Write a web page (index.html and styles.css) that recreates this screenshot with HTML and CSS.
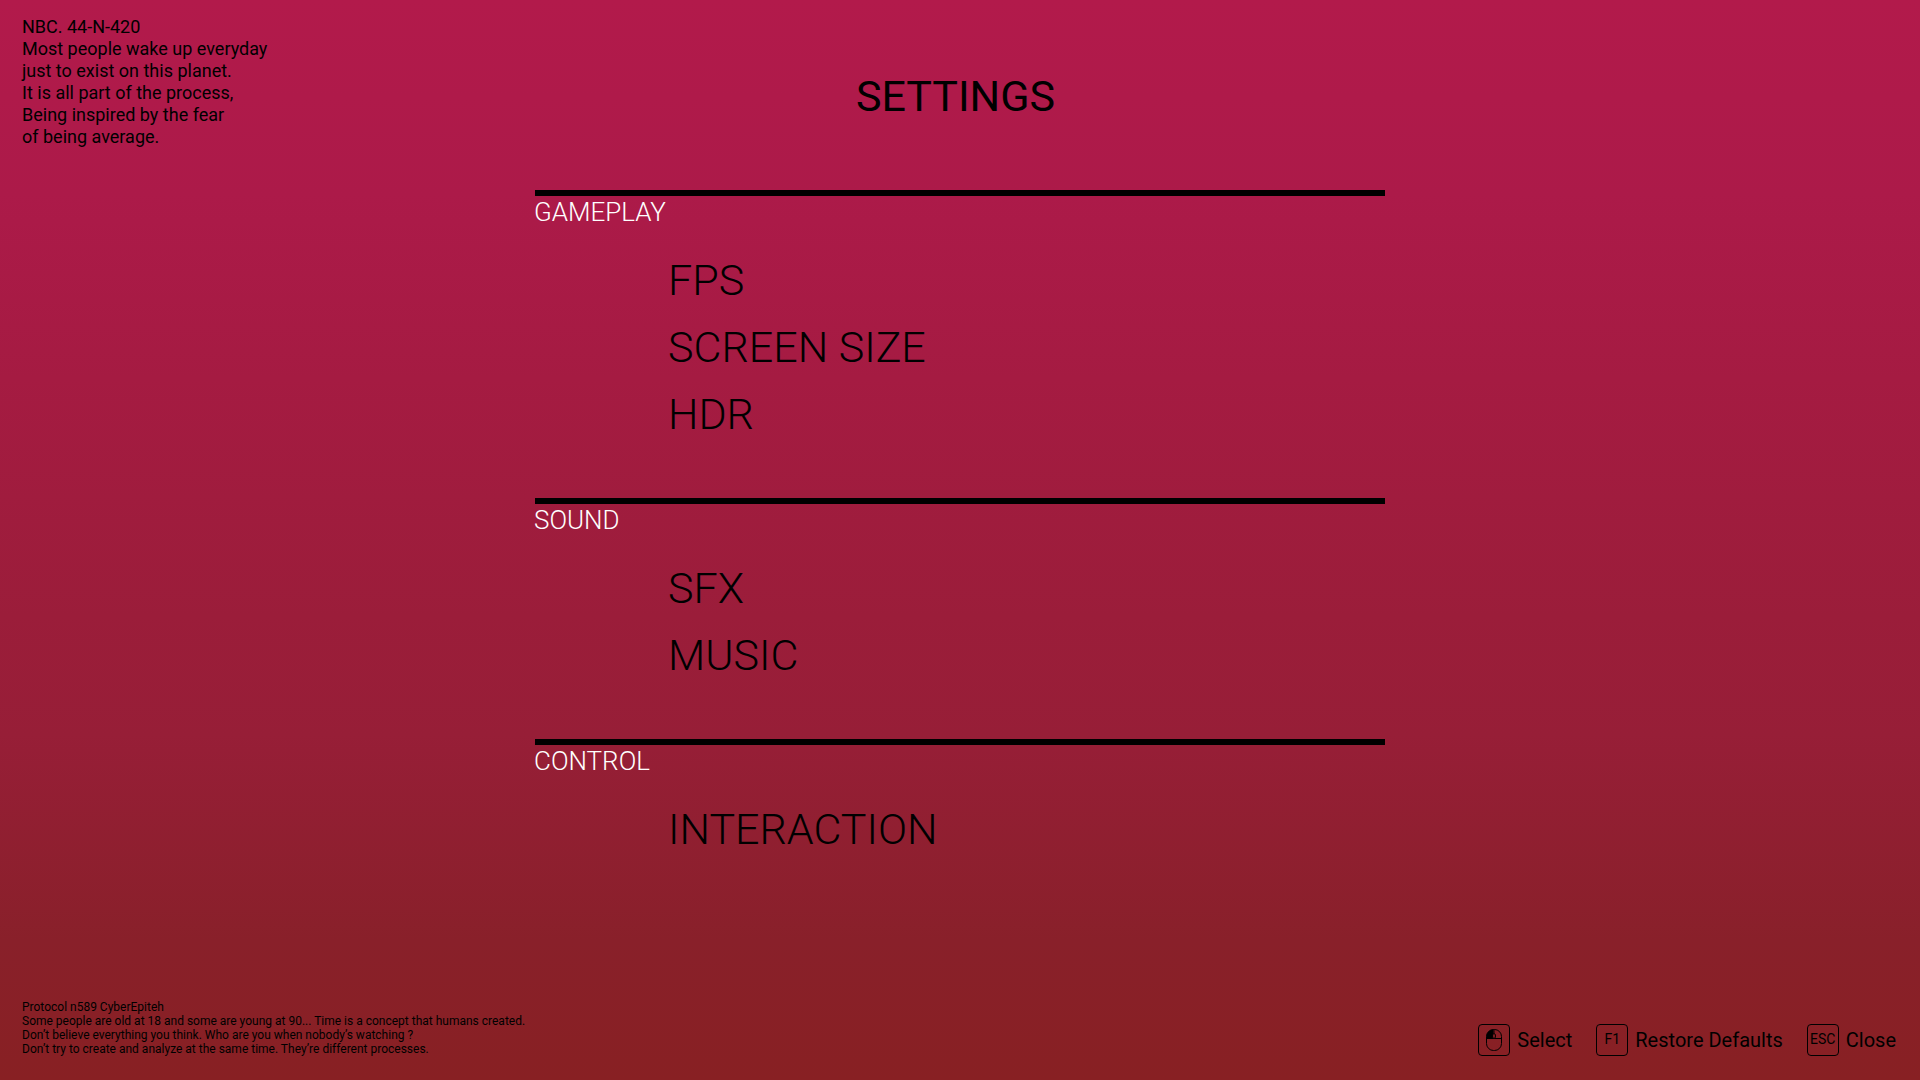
FILE: index.html
```html
<!DOCTYPE html>
<html lang="en">
<head>
<meta charset="utf-8">
<title>Settings</title>
<link rel="stylesheet" href="styles.css">
</head>
<body>
<header class="top">
  <p class="quote">NBC. 44-N-420<br>Most people wake up everyday<br>just to exist on this planet.<br>It is all part of the process,<br>Being inspired by the fear<br>of being average.</p>
  <h1 class="title">SETTINGS</h1>
</header>
<main class="menu">
  <section class="group">
    <h2 class="group-title">GAMEPLAY</h2>
    <button class="option" type="button">FPS</button>
    <button class="option" type="button">SCREEN SIZE</button>
    <button class="option" type="button">HDR</button>
  </section>
  <section class="group">
    <h2 class="group-title">SOUND</h2>
    <button class="option" type="button">SFX</button>
    <button class="option" type="button">MUSIC</button>
  </section>
  <section class="group">
    <h2 class="group-title">CONTROL</h2>
    <button class="option" type="button">INTERACTION</button>
  </section>
</main>
<footer class="bottom">
  <p class="protocol">Protocol n589 CyberEpiteh<br>Some people are old at 18 and some are young at 90... Time is a concept that humans created.<br>Don’t believe everything you think. Who are you when nobody’s watching ?<br>Don’t try to create and analyze at the same time. They’re different processes.</p>
  <nav class="actions">
    <button class="action" type="button"><span class="key"><svg class="mouse" viewBox="0 0 16 22" aria-hidden="true"><path d="M7.5 .5A7 7 0 0 0 .5 7.5V9.5H7.5V8Q6 6.500 7.500 4.500Z"/><rect x=".5" y=".5" width="15" height="21" rx="7" fill="none" stroke="#000"/><path d="M.5 9.500H15.500M8 .5V4.500" fill="none" stroke="#000"/><ellipse cx="8" cy="7" rx="1.500" ry="2.500" fill="#882025" stroke="#000"/></svg></span>Select</button>
    <button class="action" type="button"><span class="key key-text">F1</span>Restore Defaults</button>
    <button class="action" type="button"><span class="key key-text">ESC</span>Close</button>
  </nav>
</footer>
</body>
</html>
```
FILE: styles.css
```css
* { box-sizing: border-box; }
body {
  margin: 0;
  min-height: 100vh;
  display: flex;
  flex-direction: column;
  font-family: Roboto, sans-serif;
  color: #000;
  background: linear-gradient(#b21a4b, #ac1a49 18%, #a51b42 35%, #9b1d3a 57%, #971e37 68%, #89202a 87%, #882023);
}
p, h1, h2 { margin: 0; font-weight: 400; }
button { border: 0; padding: 0; background: none; font: inherit; color: inherit; cursor: pointer; }
.top { display: grid; grid-template-columns: 1fr auto 1fr; min-height: 190px; padding: 16px 31px 0 22px; }
.quote { font-size: 18px; line-height: 22px; }
.title { font-size: 43px; line-height: 48px; padding-top: 56px; }
.menu { width: 850px; max-width: 100%; margin: 0 auto; flex: 1; }
.group { display: flex; flex-direction: column; align-items: flex-start; border-top: 6px solid #000; margin-bottom: 50px; }
.group-title { color: #fff; font-size: 26px; font-weight: 300; line-height: 32px; margin: 0 0 19px -1px; }
.option { font-size: 43px; font-weight: 300; line-height: 67px; margin-left: 133px; }
.bottom { display: flex; justify-content: space-between; align-items: flex-end; padding: 0 24px 24px 22px; }
.protocol { font-size: 12px; line-height: 14px; }
.actions { display: flex; gap: 24px; }
.action { display: flex; align-items: center; gap: 7px; font-size: 20px; line-height: 32px; }
.key { display: flex; align-items: center; justify-content: center; width: 32px; height: 32px; border: 1px solid #000; border-radius: 4px; }
.key-text { font-size: 14px; line-height: 16px; padding-bottom: 2px; }
.mouse { width: 16px; height: 22px; }
```
